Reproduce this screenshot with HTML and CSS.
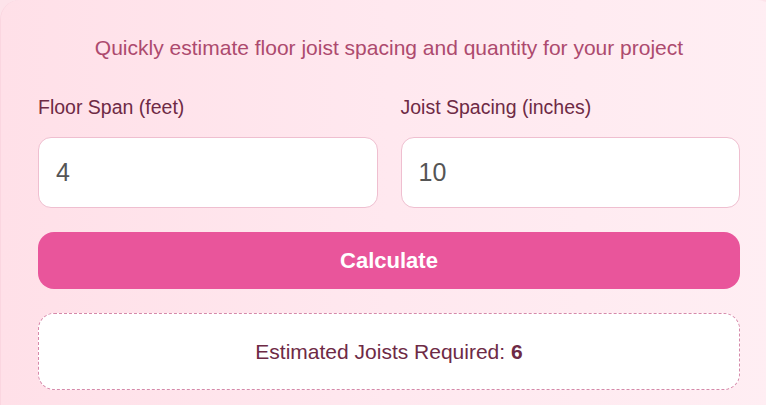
FILE: index.html
```html
<!DOCTYPE html>
<html lang="en">
<head>
<meta charset="utf-8">
<title>Floor Joist Calculator</title>
<link rel="stylesheet" href="styles.css">
</head>
<body>
  <main class="card">
    <p class="subtitle">Quickly estimate floor joist spacing and quantity for your project</p>
    <div class="fields">
      <label class="field">
        <span class="field-label">Floor Span (feet)</span>
        <input class="field-input" type="number" value="4">
      </label>
      <label class="field">
        <span class="field-label">Joist Spacing (inches)</span>
        <input class="field-input" type="number" value="10">
      </label>
    </div>
    <button class="calc-btn" type="button">Calculate</button>
    <div class="result">Estimated Joists Required: <strong>6</strong></div>
  </main>
</body>
</html>
```
FILE: styles.css
```css
* {
  box-sizing: border-box;
}

html, body {
  margin: 0;
  height: 100%;
  overflow: hidden;
}

body {
  background: #fde3ea;
  font-family: "Liberation Sans", Arial, sans-serif;
}

.card {
  width: 776px;
  margin: 0 0 0 1px;
  padding: 35px 37px 15px;
  border-radius: 20px 20px 0 0;
  background: linear-gradient(90deg, #ffe0e8 0%, #ffe8ef 50%, #ffeef3 100%);
  box-shadow: -1px 0 0 #fbd6e0;
}

.subtitle {
  margin: 0 0 35px;
  text-align: center;
  font-size: 21px;
  line-height: 26px;
  color: #ad4a6e;
}

.fields {
  display: grid;
  grid-template-columns: 1fr 1fr;
  gap: 23px;
}

.field {
  display: flex;
  flex-direction: column;
  gap: 19px;
}

.field-label {
  font-size: 19.5px;
  line-height: 22px;
  color: #6e2a45;
}

.field-input {
  height: 71px;
  width: 100%;
  padding: 0 17px;
  border: 1px solid #efbfd0;
  border-radius: 13px;
  background: #fff;
  font-family: inherit;
  font-size: 25px;
  color: #555;
  outline: none;
  -moz-appearance: textfield;
}

.field-input::-webkit-outer-spin-button,
.field-input::-webkit-inner-spin-button {
  -webkit-appearance: none;
  margin: 0;
}

.calc-btn {
  display: block;
  width: 100%;
  height: 57px;
  margin-top: 24px;
  border: 0;
  border-radius: 16px;
  background: #e9559b;
  color: #fff;
  font-family: inherit;
  font-size: 22px;
  font-weight: 700;
}

.result {
  margin-top: 24px;
  height: 77px;
  display: flex;
  align-items: center;
  justify-content: center;
  border: 1px dashed #d689aa;
  border-radius: 16px;
  background: #fff;
  font-size: 21px;
  color: #6e2a45;
}

.result strong {
  margin-left: 0.28em;
  font-weight: 700;
}
```
